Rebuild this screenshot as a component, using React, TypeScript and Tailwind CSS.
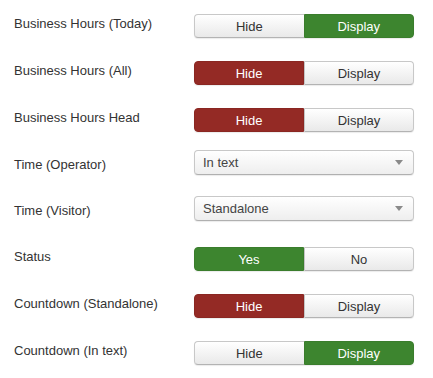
import clsx from "clsx";

type Row =
  | { label: string; kind: "toggle"; options: [string, string]; active: 0 | 1; color: "green" | "red" }
  | { label: string; kind: "select"; value: string };

const ROWS: Row[] = [
  { label: "Business Hours (Today)", kind: "toggle", options: ["Hide", "Display"], active: 1, color: "green" },
  { label: "Business Hours (All)", kind: "toggle", options: ["Hide", "Display"], active: 0, color: "red" },
  { label: "Business Hours Head", kind: "toggle", options: ["Hide", "Display"], active: 0, color: "red" },
  { label: "Time (Operator)", kind: "select", value: "In text" },
  { label: "Time (Visitor)", kind: "select", value: "Standalone" },
  { label: "Status", kind: "toggle", options: ["Yes", "No"], active: 0, color: "green" },
  { label: "Countdown (Standalone)", kind: "toggle", options: ["Hide", "Display"], active: 0, color: "red" },
  { label: "Countdown (In text)", kind: "toggle", options: ["Hide", "Display"], active: 1, color: "green" },
];

function Toggle({ options, active, color }: { options: [string, string]; active: 0 | 1; color: "green" | "red" }) {
  return (
    <div className="flex h-6 w-[220px] rounded-[4px] shadow-[0_1px_1px_rgba(0,0,0,0.08)]">
      {options.map((opt, i) => {
        const on = i === active;
        return (
          <div
            key={opt}
            className={clsx(
              "flex flex-1 items-center justify-center border text-[13px] leading-none",
              i === 0 ? "rounded-l-[4px]" : "rounded-r-[4px]",
              i === 0 && !on && "border-r-0",
              i === 1 && !on && "border-l-[#c4c4c4]",
              on
                ? color === "green"
                  ? "border-[#3a7d2c] bg-[#3d852f] text-white"
                  : "border-[#8a2722] bg-[#942a25] text-white"
                : "border-[#c8c8c8] border-b-[#b3b3b3] bg-gradient-to-b from-white to-[#e9e9e9] text-[#333]"
            )}
          >
            {opt}
          </div>
        );
      })}
    </div>
  );
}

function Select({ value }: { value: string }) {
  return (
    <div className="-mt-[5px] flex h-[25px] w-[220px] items-center justify-between rounded-[4px] border border-[#c8c8c8] border-b-[#b0b0b0] bg-gradient-to-b from-white to-[#eeeeee] pl-[8px] pr-[10px] text-[13px] text-[#444] shadow-[0_1px_1px_rgba(0,0,0,0.08)]">
      <span>{value}</span>
      <svg width="8" height="5" viewBox="0 0 8 5">
        <path d="M0 0h8L4 5z" fill="#8a8a8a" />
      </svg>
    </div>
  );
}

export default function App() {
  return (
    <div className="h-[378px] w-[433px] bg-white pt-[14px] font-['Liberation_Sans',Arial,sans-serif]">
      <div className="flex flex-col gap-[23px]">
        {ROWS.map((row) => (
          <div
            key={row.label}
            className={clsx("flex items-start pl-[14px]", row.kind === "select" ? "h-[23px]" : "h-6")}
          >
            <div className="w-[180px] pt-[1px] text-[13px] leading-[18px] text-[#333]">{row.label}</div>
            {row.kind === "toggle" ? (
              <Toggle options={row.options} active={row.active} color={row.color} />
            ) : (
              <Select value={row.value} />
            )}
          </div>
        ))}
      </div>
    </div>
  );
}
